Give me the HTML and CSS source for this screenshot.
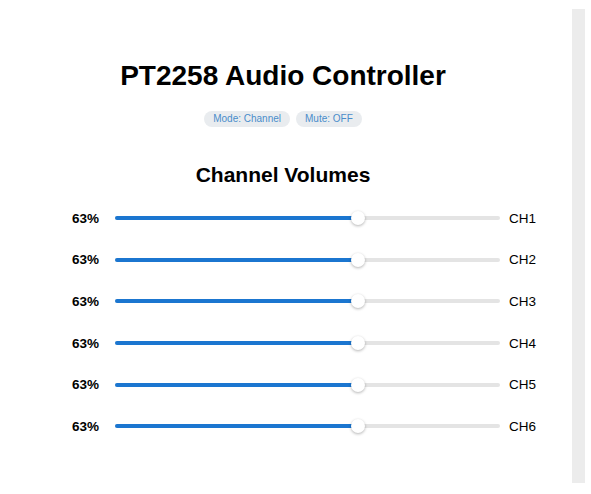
FILE: index.html
```html
<!DOCTYPE html>
<html lang="en">
<head>
    <meta charset="UTF-8">
    <meta name="viewport" content="width=device-width, initial-scale=1.0">
    <title>PT2258 Audio Controller</title>
    <link rel="stylesheet" href="styles.css">
</head>
<body>
    <div class="page">
        <h1 class="title">PT2258 Audio Controller</h1>
        <div class="badges">
            <span class="badge">Mode: Channel</span>
            <span class="badge">Mute: OFF</span>
        </div>
        <h2 class="section-title">Channel Volumes</h2>
        <div class="channels">
            <div class="channel">
                <span class="percent">63%</span>
                <div class="slider"><div class="fill" style="width: 63%"></div><div class="thumb" style="left: 63%"></div></div>
                <span class="name">CH1</span>
            </div>
            <div class="channel">
                <span class="percent">63%</span>
                <div class="slider"><div class="fill" style="width: 63%"></div><div class="thumb" style="left: 63%"></div></div>
                <span class="name">CH2</span>
            </div>
            <div class="channel">
                <span class="percent">63%</span>
                <div class="slider"><div class="fill" style="width: 63%"></div><div class="thumb" style="left: 63%"></div></div>
                <span class="name">CH3</span>
            </div>
            <div class="channel">
                <span class="percent">63%</span>
                <div class="slider"><div class="fill" style="width: 63%"></div><div class="thumb" style="left: 63%"></div></div>
                <span class="name">CH4</span>
            </div>
            <div class="channel">
                <span class="percent">63%</span>
                <div class="slider"><div class="fill" style="width: 63%"></div><div class="thumb" style="left: 63%"></div></div>
                <span class="name">CH5</span>
            </div>
            <div class="channel">
                <span class="percent">63%</span>
                <div class="slider"><div class="fill" style="width: 63%"></div><div class="thumb" style="left: 63%"></div></div>
                <span class="name">CH6</span>
            </div>
        </div>
    </div>
    <div class="scrollbar"></div>
</body>
</html>
```

FILE: styles.css
```css
body {
    margin: 0;
    display: flex;
    height: 494px;
    background-color: #ffffff;
    font-family: "Liberation Sans", Arial, sans-serif;
    color: #000;
}

.page {
    width: 566px;
    padding-top: 60px;
    display: flex;
    flex-direction: column;
    align-items: center;
}

.title {
    margin: 0;
    font-size: 28px;
    line-height: 32px;
    font-weight: bold;
}

.badges {
    margin-top: 19px;
    display: flex;
    gap: 6px;
}

.badge {
    height: 16px;
    line-height: 16px;
    padding: 0 9px;
    border-radius: 8px;
    background-color: #e9ecef;
    color: #4a8ccb;
    font-size: 10px;
}

.section-title {
    margin: 35px 0 0;
    font-size: 21px;
    line-height: 25px;
    font-weight: bold;
}

.channels {
    align-self: stretch;
    margin-top: 21px;
    padding-left: 59px;
    display: flex;
    flex-direction: column;
    gap: 21.7px;
}

.channel {
    display: flex;
    align-items: center;
    height: 20px;
}

.percent {
    width: 40px;
    text-align: right;
    font-size: 13.5px;
    font-weight: bold;
}

.slider {
    position: relative;
    width: 385px;
    height: 4px;
    margin: 0 9px 0 16px;
    border-radius: 2px;
    background-color: #e4e4e4;
}

.fill {
    height: 100%;
    border-radius: 2px;
    background-color: #1b76d0;
}

.thumb {
    position: absolute;
    top: 50%;
    width: 14px;
    height: 14px;
    margin: -7px 0 0 -7px;
    border-radius: 50%;
    background-color: #fff;
    box-shadow: 0 1px 3px rgba(0, 0, 0, 0.3);
}

.name {
    font-size: 13.5px;
}

.scrollbar {
    width: 13px;
    height: 474px;
    margin: 9px 0 0 6px;
    background-color: #ececec;
}
```
